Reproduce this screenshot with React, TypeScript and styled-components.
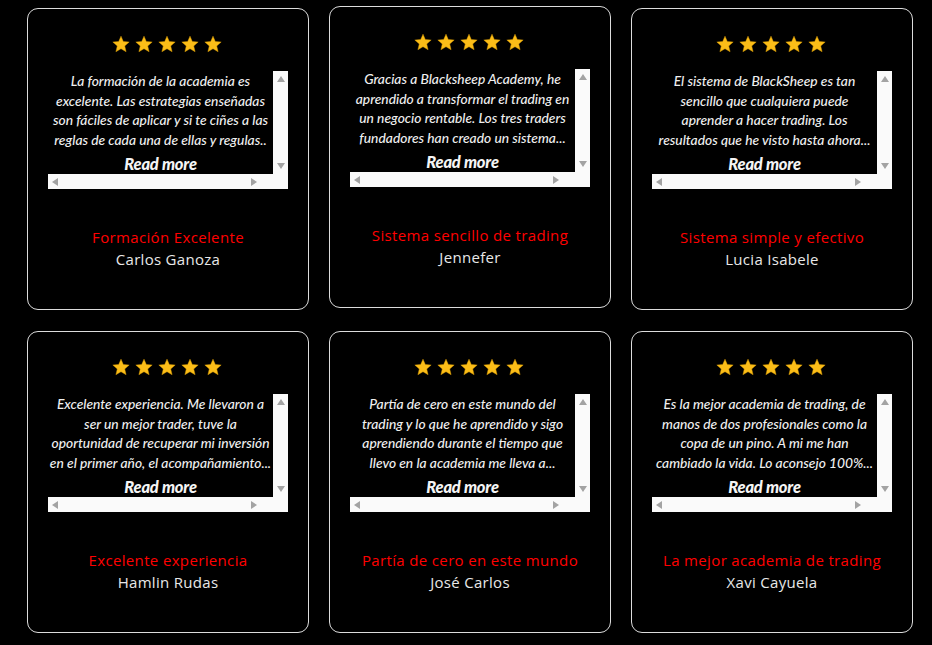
import { createGlobalStyle } from 'styled-components'
import styled from 'styled-components'

const GlobalStyle = createGlobalStyle`
  html, body {
    margin: 0;
    padding: 0;
    background: #000;
  }
  body {
    font-family: 'Open Sans', 'Noto Sans', sans-serif;
  }
`

const Page = styled.div`
  display: grid;
  grid-template-columns: repeat(3, 282px);
  align-content: start;
  column-gap: 20px;
  row-gap: 21px;
  padding: 8px 0 0 27px;
  min-height: 645px;
  box-sizing: border-box;
  background: #000;
`

const Card = styled.div<{ $lifted?: boolean }>`
  height: 302px;
  box-sizing: border-box;
  border: 1px solid #dcdcdc;
  border-radius: 11px;
  background: #000;
  display: flex;
  flex-direction: column;
  align-items: center;
  padding-top: 26px;
  transform: ${(p) => (p.$lifted ? 'translateY(-2px)' : 'none')};
`

const Stars = styled.div`
  display: flex;
  gap: 5px;
  height: 18px;
  margin-left: -2px;
`

const ScrollBox = styled.div`
  margin-top: 18px;
  width: 240px;
  height: 118px;
  display: grid;
  grid-template-columns: 1fr 15px;
  grid-template-rows: 1fr 15px;
  background: #fafafa;
`

const Viewport = styled.div`
  background: #000;
  overflow: hidden;
  display: flex;
  flex-direction: column;
  align-items: center;
`

const Line = styled.div`
  white-space: nowrap;
  font-family: 'Lato', 'Open Sans', sans-serif;
  font-style: italic;
  font-weight: 500;
  font-size: 13.8px;
  line-height: 19.5px;
  color: #efefef;
  text-align: center;
`

const ReadMore = styled.div`
  margin-top: 5px;
  font-family: 'Lato', 'Open Sans', sans-serif;
  font-style: italic;
  font-weight: 900;
  font-size: 16.5px;
  line-height: 20px;
  color: #f4f4f4;
  letter-spacing: -0.2px;
`

const VBar = styled.div`
  display: flex;
  flex-direction: column;
  justify-content: space-between;
  align-items: center;
  padding: 5px 0 5px;
`

const HBar = styled.div`
  display: flex;
  justify-content: space-between;
  align-items: center;
  padding: 0 16px 0 4px;
`

const Arrow = styled.span<{ $dir: 'up' | 'down' | 'left' | 'right' }>`
  width: 0;
  height: 0;
  border-style: solid;
  border-color: transparent;
  ${(p) =>
    p.$dir === 'up'
      ? 'border-width: 0 4.5px 6px 4.5px; border-bottom-color: #a3a3a3;'
      : p.$dir === 'down'
      ? 'border-width: 6px 4.5px 0 4.5px; border-top-color: #a3a3a3;'
      : p.$dir === 'left'
      ? 'border-width: 4.5px 6px 4.5px 0; border-right-color: #a3a3a3;'
      : 'border-width: 4.5px 0 4.5px 6px; border-left-color: #a3a3a3;'}
`

const Corner = styled.div``

const Title = styled.div`
  margin-top: 37px;
  font-family: 'Open Sans', 'Noto Sans', sans-serif;
  font-size: 15px;
  font-weight: 500;
  letter-spacing: 0.35px;
  line-height: 22px;
  color: #f00;
`

const Name = styled.div`
  font-family: 'Open Sans', 'Noto Sans', sans-serif;
  font-size: 15px;
  font-weight: 500;
  letter-spacing: 0.3px;
  line-height: 22px;
  color: #e8e8e8;
`

const Star = () => (
  <svg width="18" height="18" viewBox="0 0 24 24">
    <path
      d="M12 1.5l3.1 7.2 7.8.7-5.9 5.2 1.8 7.7L12 18.3l-6.8 4 1.8-7.7-5.9-5.2 7.8-.7z"
      fill="#fbbd18"
      stroke="#d99a00"
      strokeWidth="0.6"
    />
  </svg>
)

const reviews = [
  {
    lines: [
      'La formación de la academia es',
      'excelente. Las estrategias enseñadas',
      'son fáciles de aplicar y si te ciñes a las',
      'reglas de cada una de ellas y regulas..',
    ],
    title: 'Formación Excelente',
    name: 'Carlos Ganoza',
  },
  {
    lines: [
      'Gracias a Blacksheep Academy, he',
      'aprendido a transformar el trading en',
      'un negocio rentable. Los tres traders',
      'fundadores han creado un sistema...',
    ],
    title: 'Sistema sencillo de trading',
    name: 'Jennefer',
    lifted: true,
  },
  {
    lines: [
      'El sistema de BlackSheep es tan',
      'sencillo que cualquiera puede',
      'aprender a hacer trading. Los',
      'resultados que he visto hasta ahora...',
    ],
    title: 'Sistema simple y efectivo',
    name: 'Lucia Isabele',
  },
  {
    lines: [
      'Excelente experiencia. Me llevaron a',
      'ser un mejor trader, tuve la',
      'oportunidad de recuperar mi inversión',
      'en el primer año, el acompañamiento...',
    ],
    title: 'Excelente experiencia',
    name: 'Hamlin Rudas',
  },
  {
    lines: [
      'Partía de cero en este mundo del',
      'trading y lo que he aprendido y sigo',
      'aprendiendo durante el tiempo que',
      'llevo en la academia me lleva a...',
    ],
    title: 'Partía de cero en este mundo',
    name: 'José Carlos',
  },
  {
    lines: [
      'Es la mejor academia de trading, de',
      'manos de dos profesionales como la',
      'copa de un pino. A mi me han',
      'cambiado la vida. Lo aconsejo 100%...',
    ],
    title: 'La mejor academia de trading',
    name: 'Xavi Cayuela',
  },
]

export default function App() {
  return (
    <>
      <GlobalStyle />
      <Page>
        {reviews.map((r) => (
          <Card key={r.name} $lifted={r.lifted}>
            <Stars>
              {[0, 1, 2, 3, 4].map((i) => (
                <Star key={i} />
              ))}
            </Stars>
            <ScrollBox>
              <Viewport>
                {r.lines.map((l) => (
                  <Line key={l}>{l}</Line>
                ))}
                <ReadMore>Read more</ReadMore>
              </Viewport>
              <VBar>
                <Arrow $dir="up" />
                <Arrow $dir="down" />
              </VBar>
              <HBar>
                <Arrow $dir="left" />
                <Arrow $dir="right" />
              </HBar>
              <Corner />
            </ScrollBox>
            <Title>{r.title}</Title>
            <Name>{r.name}</Name>
          </Card>
        ))}
      </Page>
    </>
  )
}
